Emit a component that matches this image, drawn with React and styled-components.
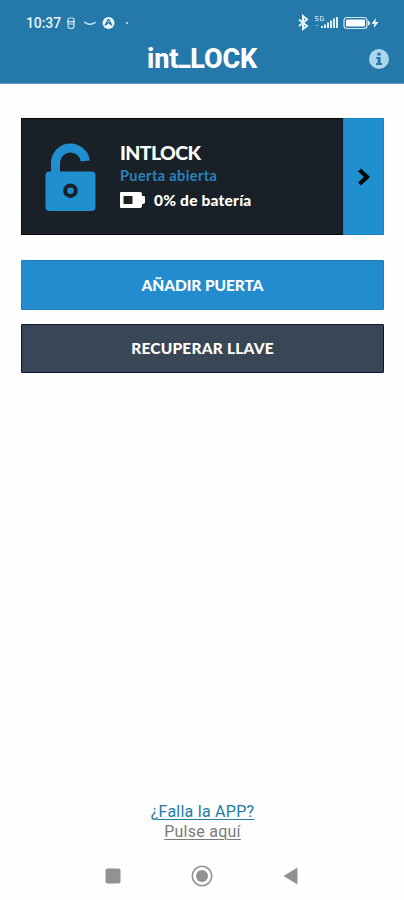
import styled, { createGlobalStyle } from 'styled-components';

const GlobalStyle = createGlobalStyle`
  * {
    box-sizing: border-box;
  }
  body {
    margin: 0;
    background: #fefefe;
  }
  svg {
    display: block;
    flex-shrink: 0;
  }
`;

const Screen = styled.div`
  width: 404px;
  height: 900px;
  display: flex;
  flex-direction: column;
  overflow: hidden;
  background: #fefefe;
  font-family: Roboto, sans-serif;
`;

const Header = styled.header`
  height: 84px;
  background: #2478aa;
  border-bottom: 1px solid #5d9fc4;
`;

const StatusBar = styled.div`
  height: 38px;
  padding: 8px 25px 0 26px;
  display: flex;
  align-items: center;
  justify-content: space-between;
  color: #e6f3f8;
`;

const StatusGroup = styled.div`
  display: flex;
  align-items: center;
`;

const Clock = styled.span`
  width: 40px;
  font-size: 14px;
  font-weight: 500;
  letter-spacing: -0.1px;
  white-space: nowrap;
`;

const TitleRow = styled.div`
  height: 45px;
  padding: 0 15px;
  display: grid;
  grid-template-columns: 1fr 110px 1fr;
  align-items: center;
`;

const Logo = styled.h1`
  margin: -5px 0 0;
  font-size: 27px;
  font-weight: 800;
  line-height: 30px;
  letter-spacing: -0.1px;
  color: #ffffff;
  white-space: nowrap;
`;

const LogoDash = styled.span`
  vertical-align: 3px;
  line-height: 1;
`;

const InfoButton = styled.button`
  justify-self: end;
  margin: -3px 0 0;
  padding: 0;
  border: none;
  background: none;
`;

const Main = styled.main`
  flex: 1;
  padding: 34px 20px 0 21px;
  display: flex;
  flex-direction: column;
`;

const LockCard = styled.section`
  height: 117px;
  margin-bottom: 25px;
  display: flex;
  border: 1px solid #05080b;
  border-right: none;
  background: #192027;
`;

const LockIcon = styled.div`
  width: 98px;
  padding: 22px 0 0 23px;
`;

const LockDetails = styled.div`
  flex: 1;
  padding-top: 22px;
  font-family: Lato, sans-serif;
  white-space: nowrap;
`;

const LockName = styled.h2`
  margin: 0;
  font-size: 19.5px;
  font-weight: 900;
  line-height: 24px;
  letter-spacing: -0.6px;
  color: #ffffff;
`;

const LockState = styled.div`
  font-size: 14.5px;
  font-weight: 700;
  line-height: 21px;
  letter-spacing: 0.4px;
  color: #2c82bb;
`;

const Battery = styled.div`
  height: 28px;
  display: flex;
  align-items: center;
  gap: 9px;
  font-size: 15.5px;
  font-weight: 900;
  letter-spacing: 0.2px;
  color: #ffffff;
`;

const OpenButton = styled.button`
  width: 41px;
  margin: -1px 0;
  padding: 0;
  display: flex;
  align-items: center;
  justify-content: center;
  border: 1px solid #1b81bd;
  background: #208fd0;
`;

const ActionButton = styled.button`
  height: ${(props) => (props.$dark ? '49px' : '50px')};
  margin-bottom: 14px;
  padding: 0 0 1px;
  border: 1px solid ${(props) => (props.$dark ? '#10163b' : '#1b80bf')};
  border-radius: 1px;
  background: ${(props) => (props.$dark ? '#394656' : '#238ccf')};
  color: #ffffff;
  font-family: Lato, sans-serif;
  font-size: 15.5px;
  font-weight: 900;
  letter-spacing: ${(props) => props.$spacing};
`;

const Help = styled.div`
  padding: 0 0 8px 1px;
  display: flex;
  flex-direction: column;
  align-items: center;
`;

const HelpLink = styled.a`
  font-size: 16px;
  line-height: 20px;
  letter-spacing: 0.25px;
  color: ${(props) => props.$color};
  text-decoration: underline;
  text-decoration-thickness: 1px;
  text-underline-offset: 2px;
`;

const NavBar = styled.nav`
  height: 50px;
  padding: 2px 105px 0;
  display: flex;
  align-items: center;
  justify-content: space-between;
`;

const StatusLeft = () => (
  <StatusGroup>
    <Clock>10:37</Clock>
    <svg width="64" height="16" viewBox="0 0 64 16" fill="none">
      <g stroke="#cfe6ef" strokeWidth="1.2">
        <path d="M2 6V4.5Q2 3 3.5 3H6.5Q8 3 8 4.5V6M1 6.6H9M2 9H8" />
        <path d="M2 7V11Q2 13.5 5 13.5Q8 13.5 8 11V7" />
      </g>
      <path d="M18 7.2Q20 7.6 21 8.5Q24 10 27 8.5Q28 7.8 30 7.5" stroke="#b9dbe7" strokeWidth="1.5" />
      <circle cx="42.5" cy="8" r="6" fill="#e8f5f8" />
      <path d="M42.5 4L39 10.5M42.5 4L46 10.5M40 9.5L42.5 7.5L45 9.5" stroke="#2478aa" strokeWidth="1.3" />
      <circle cx="61" cy="8" r="1" fill="#d5ebf3" />
    </svg>
  </StatusGroup>
);

const StatusRight = () => (
  <svg width="82" height="18" viewBox="297 14 82 18" fill="none">
    <path d="M299 19.5L307 26L303 29V16L307 19.5L299 26" stroke="#e6f3f8" strokeWidth="2" />
    <g stroke="#a9cfdf" strokeWidth="1.2">
      <path d="M318.5 16.5H315.5V18.5H318V20.5H315" />
      <path d="M323.5 16.5H320.5V20.5H323.5V18.5H322" />
      <path d="M315 25.5H319" opacity="0.5" />
    </g>
    <path
      d="M321 28V26H323V28ZM324 28V24.5H326V28ZM327 28V22.5H329V28ZM330 28V20.5H332V28ZM333 28V18.5H335V28ZM336 28V17H338V28Z"
      fill="#dceff5"
    />
    <rect x="344" y="17.5" width="23" height="11" rx="3" stroke="#d4e9f1" strokeWidth="1.2" />
    <rect x="346" y="19.5" width="19" height="7" rx="1" fill="#ffffff" />
    <path d="M368 20.5Q370 21 370 23Q370 25 368 25.5Z" fill="#e6f3f8" />
    <path d="M376 18L371.500 23.7H374.500L373.8 28L378.500 22H375.3Z" fill="#ffffff" />
  </svg>
);

const InfoIcon = () => (
  <svg width="20" height="20" viewBox="0 0 20 20">
    <circle cx="10" cy="10" r="10" fill="#add5ec" />
    <path d="M8.3 3.7H11.7V6.5H8.3ZM7.3 8H11.6V14H13V16H7V14H8.5V10H7.3Z" fill="#2478aa" />
  </svg>
);

const OpenLockIcon = () => (
  <svg width="52" height="70" viewBox="0 0 52 70">
    <path d="M10.5 32V20.5A15 15 0 0 1 40.3 20" fill="none" stroke="#208fd0" strokeWidth="9" />
    <rect x="0.5" y="30.5" width="50" height="39.5" rx="4" fill="#208fd0" />
    <circle cx="25.5" cy="49.7" r="5.3" fill="none" stroke="#17212a" strokeWidth="4" />
  </svg>
);

const App = () => {
  return (
    <>
      <GlobalStyle />
      <Screen>
        <Header>
          <StatusBar>
            <StatusLeft />
            <StatusRight />
          </StatusBar>
          <TitleRow>
            <span />
            <Logo>
              int<LogoDash>_</LogoDash>LOCK
            </Logo>
            <InfoButton>
              <InfoIcon />
            </InfoButton>
          </TitleRow>
        </Header>
        <Main>
          <LockCard>
            <LockIcon>
              <OpenLockIcon />
            </LockIcon>
            <LockDetails>
              <LockName>INTLOCK</LockName>
              <LockState>Puerta abierta</LockState>
              <Battery>
                <svg width="25" height="16" viewBox="0 0 25 16">
                  <path
                    d="M1 0H20Q22 0 22 2V4H24Q25 4 25 5V10Q25 12 22 12V14Q22 16 20 16H1Q0 16 0 15V1Q0 0 1 0ZM3.5 4V12H12.5V4Z"
                    fill="#ffffff"
                    fillRule="evenodd"
                  />
                </svg>
                <span>0% de batería</span>
              </Battery>
            </LockDetails>
            <OpenButton>
              <svg width="14" height="18" viewBox="0 0 14 18" fill="none">
                <path d="M2.5 2L10 9L2.5 16" stroke="#05080b" strokeWidth="4.2" />
              </svg>
            </OpenButton>
          </LockCard>
          <ActionButton $spacing="-0.1px">AÑADIR PUERTA</ActionButton>
          <ActionButton $dark $spacing="0.2px">
            RECUPERAR LLAVE
          </ActionButton>
        </Main>
        <Help>
          <HelpLink $color="#247ba5">¿Falla la APP?</HelpLink>
          <HelpLink $color="#7b7b7b">Pulse aquí</HelpLink>
        </Help>
        <NavBar>
          <svg width="16" height="16" viewBox="0 0 16 16">
            <rect x="0.5" y="0.5" width="15" height="15" rx="2" fill="#929292" />
          </svg>
          <svg width="22" height="22" viewBox="0 0 22 22">
            <circle cx="11" cy="11" r="9.7" fill="none" stroke="#929292" strokeWidth="1.6" />
            <circle cx="11" cy="11" r="6" fill="#929292" />
          </svg>
          <svg width="16" height="18" viewBox="0 0 16 18">
            <path d="M0.5 9L14.5 0.5V17.5Z" fill="#929292" />
          </svg>
        </NavBar>
      </Screen>
    </>
  );
};

export default App;
